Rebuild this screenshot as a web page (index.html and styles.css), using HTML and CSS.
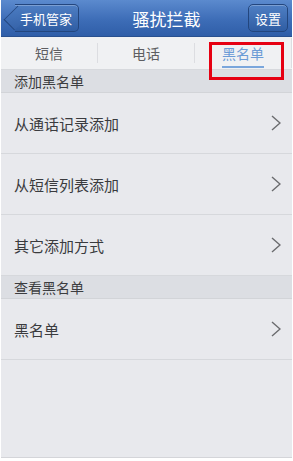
FILE: index.html
```html
<!DOCTYPE html>
<html lang="zh">
<head>
    <meta charset="UTF-8">
    <meta name="viewport" content="width=device-width, initial-scale=1.0">
    <title>骚扰拦截</title>
    <link rel="stylesheet" href="styles.css">
</head>
<body>
    <div class="ecran">
        <div class="entete">
            <div class="retour"><span>手机管家</span></div>
            <div class="titre">骚扰拦截</div>
            <div class="reglages">设置</div>
        </div>

        <div class="onglets">
            <div class="onglet">短信</div>
            <div class="onglet">电话</div>
            <div class="onglet actif"><span>黑名单</span></div>
            <div class="cadre-rouge"></div>
        </div>

        <div class="section">添加黑名单</div>
        <div class="ligne">
            <span>从通话记录添加</span>
            <svg class="fleche" width="10" height="16" viewBox="0 0 10 16"><path d="M1 1 L9 8 L1 15" fill="none" stroke="#6a6b6e" stroke-width="1.4"/></svg>
        </div>
        <div class="ligne">
            <span>从短信列表添加</span>
            <svg class="fleche" width="10" height="16" viewBox="0 0 10 16"><path d="M1 1 L9 8 L1 15" fill="none" stroke="#6a6b6e" stroke-width="1.4"/></svg>
        </div>
        <div class="ligne">
            <span>其它添加方式</span>
            <svg class="fleche" width="10" height="16" viewBox="0 0 10 16"><path d="M1 1 L9 8 L1 15" fill="none" stroke="#6a6b6e" stroke-width="1.4"/></svg>
        </div>

        <div class="section">查看黑名单</div>
        <div class="ligne">
            <span>黑名单</span>
            <svg class="fleche" width="10" height="16" viewBox="0 0 10 16"><path d="M1 1 L9 8 L1 15" fill="none" stroke="#6a6b6e" stroke-width="1.4"/></svg>
        </div>
    </div>
</body>
</html>
```

FILE: styles.css
```css
body {
    margin: 0;
    font-family: "Noto Sans CJK SC", "Noto Sans", sans-serif;
    background-color: #fff;
}
.ecran {
    width: 291px;
    height: 457px;
    margin-left: 1px;
    background-color: #e8e9ed;
    border-bottom: 1px solid #d4d5d9;
    overflow: hidden;
}
.entete {
    height: 37px;
    display: flex;
    align-items: center;
    justify-content: space-between;
    padding: 0 4px;
    background: linear-gradient(#5b8ace, #3d6db7 55%, #2f5ea8);
    border-bottom: 1px solid #28508f;
    box-sizing: border-box;
}
.retour, .reglages {
    height: 28px;
    display: flex;
    align-items: center;
    color: #fff;
    font-size: 13px;
    background: linear-gradient(#4f7fc4, #2f5da3);
    border: 1px solid #23467e;
    box-sizing: border-box;
    box-shadow: inset 0 1px 0 rgba(255, 255, 255, 0.25);
}
.retour {
    position: relative;
    margin-left: 10px;
    padding: 0 6px 0 5px;
    border-left: none;
    border-radius: 0 5px 5px 0;
}
.retour::before {
    content: "";
    position: absolute;
    left: -9px;
    top: 3px;
    width: 19px;
    height: 19px;
    transform: rotate(45deg) scaleX(0.75);
    background: linear-gradient(135deg, #4a7bc1, #3663a9);
    border-left: 1px solid #23467e;
    border-bottom: 1px solid #23467e;
}
.retour span {
    position: relative;
}
.reglages {
    padding: 0 6px;
    border-radius: 5px;
}
.titre {
    color: #fff;
    font-size: 17px;
    margin-left: 6px;
}
.onglets {
    position: relative;
    height: 32px;
    display: flex;
    align-items: center;
    background-color: #f0f1f3;
    border-bottom: 1px solid #d7d9dd;
}
.onglet {
    flex: 1;
    text-align: center;
    font-size: 14px;
    color: #5d5e62;
    border-right: 1px solid #dcdde1;
    line-height: 20px;
}
.onglet:last-of-type {
    border-right: none;
}
.onglet.actif {
    color: #6b9bd6;
}
.onglet.actif span {
    display: inline-block;
    border-bottom: 2px solid #7aa6dc;
    padding-bottom: 3px;
    margin-top: 5px;
}
.cadre-rouge {
    position: absolute;
    left: 208px;
    top: 5px;
    width: 75px;
    height: 38px;
    border: 3px solid #e60012;
    box-sizing: border-box;
    z-index: 2;
}
.section {
    height: 22px;
    line-height: 22px;
    padding-left: 13px;
    font-size: 14px;
    color: #3c3d40;
    background-color: #dcdee3;
    border-bottom: 1px solid #d2d4d8;
}
.ligne {
    height: 60px;
    display: flex;
    align-items: center;
    justify-content: space-between;
    padding: 0 11px 0 13px;
    font-size: 15px;
    color: #3a3b3e;
    border-bottom: 1px solid #d6d8dc;
}
.fleche {
    display: block;
}
```
